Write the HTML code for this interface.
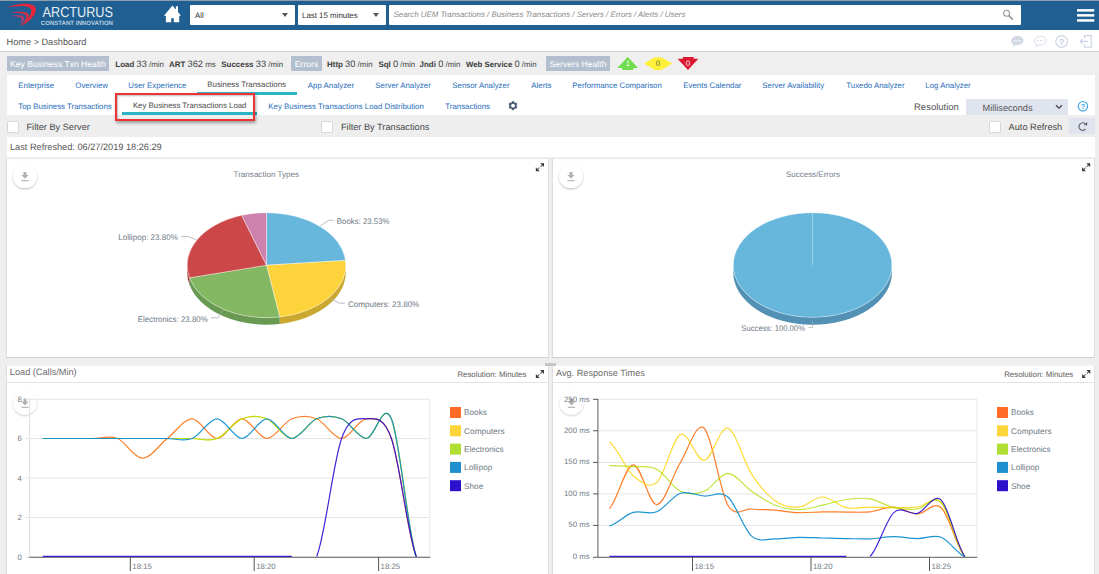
<!DOCTYPE html>
<html>
<head>
<meta charset="utf-8">
<title>Dashboard</title>
<style>
*{box-sizing:border-box;margin:0;padding:0}
html,body{text-rendering:geometricPrecision;width:1099px;height:574px;overflow:hidden;background:#eeeeee;font-family:"Liberation Sans",sans-serif;}
#root{position:relative;width:1099px;height:574px;overflow:hidden;background:#eeeeee;}
.abs{position:absolute}
.t{position:absolute;white-space:nowrap;line-height:1}
/* header */
#hdr{left:0;top:0;width:1099px;height:30px;background:#1f5f91}
.hsel{background:#fff;top:5px;height:19.6px;border-radius:1px}
.hsel .t{font-size:7.9px;color:#333;top:6.6px}
.tri{position:absolute;width:0;height:0;border-left:3px solid transparent;border-right:3px solid transparent;border-top:4.6px solid #555;top:8.1px}
/* breadcrumb */
#bc{left:0;top:30px;width:1099px;height:22px;background:#fff;border-bottom:1px solid #d4d4d4}
#bc .t{font-size:9.2px;color:#555;left:6.5px;top:8px}
/* health row */
#hr{left:0;top:52px;width:1099px;height:23px;background:#efefef}
.badge{position:absolute;top:4px;height:15px;background:#b3bfce;color:#fff;font-size:8.6px;line-height:16.6px;white-space:nowrap;text-align:center}
.hl{position:absolute;top:6.5px;font-size:7.9px;color:#444;white-space:nowrap;line-height:10px}
.hl b{font-weight:bold;font-size:7.95px;color:#3c3c3c}
.hl i{font-style:normal;font-size:9.3px;color:#444}
/* tabs */
#tabs{left:7px;top:75px;width:1088px;height:40px;background:#fff}
.tab{position:absolute;font-size:7.87px;margin-left:.3px;color:#2a6ebb;white-space:nowrap;line-height:10px}
.tab.on{color:#4a4a4a}
/* filter row */
#flt{left:0;top:115px;width:1099px;height:22px;background:#eeeeee}
.cb{position:absolute;width:12px;height:12px;background:#fff;border:1px solid #d6d6d6;border-radius:1.5px}
.fl{position:absolute;font-size:9.2px;color:#464646;white-space:nowrap;line-height:12px}
#lr{left:7px;top:137px;width:1088px;height:20px;background:#fff}
/* panels */
.panel{position:absolute;background:#fff;border:1px solid #dedede;border-top-color:#e9e9e9;border-bottom-color:#cfcfcf}
.ptitle{position:absolute;left:0;top:0;right:0;height:17px;border-bottom:1px solid #e4e4e4}
.dl{position:absolute;width:24px;height:24px;border-radius:12px;background:#fff;box-shadow:0 1px 3px rgba(0,0,0,.22)}
svg{position:absolute;left:0;top:0;overflow:visible}
svg text{font-family:"Liberation Sans",sans-serif}
</style>
</head>
<body>
<div id="root">

<!-- HEADER -->
<div id="hdr" class="abs"><div class="abs" style="left:0;top:0;width:1099px;height:1px;background:#8c9eb0"></div>
  <svg width="1099" height="30" viewBox="0 0 1099 30">
    <!-- logo swoosh -->
    <g>
      <path d="M6 7.9 C14 4.2 27 2 33.2 5.3 C38.8 9 36 17.5 21 26.6 C30.5 17.5 33.4 10.6 29.8 7.7 C26 5 15 5.9 6 7.9 Z" fill="#e9263a"/>
      <path d="M9.6 13.4 C16 11.4 25 11 28.2 13.8 C30.6 17 26 22.2 20.4 25.9 C25 21 27.4 17.6 25.7 15.3 C23.5 12.9 16 12.8 9.6 13.4Z" fill="#d62c4a"/>
      <path d="M10.4 16.3 C15 15 21.5 14.8 23.6 16.8 C25.2 19 22.6 22.6 19.4 25.6 C21.5 22.5 22.7 19.9 21.4 18.5 C20 16.7 15 16.1 10.4 16.3Z" fill="#b93a6c"/>
    </g>
    <text x="42.5" y="17.4" font-size="14.6" fill="#e4eef6" textLength="70.5" lengthAdjust="spacingAndGlyphs">ARCTURUS</text>
    <text x="40.8" y="25" font-size="6.2" font-weight="bold" fill="#b9cfe2" textLength="72.2" lengthAdjust="spacingAndGlyphs">CONSTANT INNOVATION</text>
    <!-- home icon -->
    <path d="M163.9 15.7 L172.5 5.5 L175.9 9.5 L175.9 6.2 L178 6.2 L178 12 L181.1 15.7 L179.2 15.7 L179.2 22.25 L173.8 22.25 L173.8 18.3 L171.2 18.3 L171.2 22.25 L165.9 22.25 L165.9 15.7 Z" fill="#fff"/>
    <!-- hamburger -->
    <rect x="1077" y="9.1" width="17.3" height="2.5" fill="#fff"/>
    <rect x="1077" y="14.1" width="17.3" height="2.5" fill="#fff"/>
    <rect x="1077" y="19.2" width="17.3" height="2.5" fill="#fff"/>
  </svg>
  <div class="abs hsel" style="left:190px;width:105px"><span class="t" style="left:5px">All</span><span class="tri" style="left:92px"></span></div>
  <div class="abs hsel" style="left:298px;width:88px"><span class="t" style="left:4px">Last 15 minutes</span><span class="tri" style="left:75px"></span></div>
  <div class="abs hsel" style="left:389px;width:632px"><span class="t" style="left:4.6px;font-style:italic;font-size:7.88px;color:#8a8a8a;top:6px">Search UEM Transactions / Business Transactions / Servers / Errors / Alerts / Users</span>
    <svg width="632" height="19" viewBox="0 -0.5 632 19"><circle cx="617.6" cy="7.8" r="3" fill="none" stroke="#999" stroke-width="1.1"/><path d="M620 10.3 L623.4 13.7" stroke="#999" stroke-width="1.7" stroke-linecap="round"/></svg>
  </div>
</div>

<!-- BREADCRUMB -->
<div id="bc" class="abs"><span class="t">Home &gt; Dashboard</span>
  <svg width="1099" height="22" viewBox="0 30 1099 22">
    <!-- filled chat -->
    <path d="M1011 40.6 a6.3 4.6 0 1 1 4.2 4.3 l-2.6 1.9 l0.6 -2.6 a5 4.4 0 0 1 -2.2 -3.6z" fill="#d3d9e4"/>
    <circle cx="1014.6" cy="40.8" r="0.8" fill="#fff"/><circle cx="1017.3" cy="40.8" r="0.8" fill="#fff"/><circle cx="1020" cy="40.8" r="0.8" fill="#fff"/>
    <!-- outline chat -->
    <path d="M1034.4 40.6 a6 4.4 0 1 1 4.2 4.2 l-2.6 1.9 l0.6 -2.6 a5 4.4 0 0 1 -2.2 -3.5z" fill="none" stroke="#dadfe9" stroke-width="1"/>
    <circle cx="1037.8" cy="40.8" r="0.7" fill="#d3d9e4"/><circle cx="1040.4" cy="40.8" r="0.7" fill="#d3d9e4"/><circle cx="1043" cy="40.8" r="0.7" fill="#d3d9e4"/>
    <!-- help -->
    <circle cx="1061.6" cy="41.4" r="5.8" fill="none" stroke="#c9d3e2" stroke-width="1.1"/>
    <text x="1061.6" y="44.6" font-size="9" font-weight="bold" fill="#c9d3e2" text-anchor="middle">?</text>
    <!-- logout -->
    <path d="M1084.6 38.2 V35.6 H1091.2 V47.2 H1084.6 V44.6" fill="none" stroke="#c9d3e2" stroke-width="1.1"/>
    <path d="M1088 41.4 H1080.4 M1082.8 39 L1080.4 41.4 L1082.8 43.8" fill="none" stroke="#c9d3e2" stroke-width="1.1"/>
  </svg>
</div>

<!-- HEALTH ROW -->
<div id="hr" class="abs">
  <div class="badge" style="left:6.6px;width:102.9px">Key Business Txn Health</div>
  <span class="hl" style="left:115.3px"><b>Load</b> <i>33</i> /min</span>
  <span class="hl" style="left:169px"><b>ART</b> <i>362</i> ms</span>
  <span class="hl" style="left:221.3px"><b>Success</b> <i>33</i> /min</span>
  <div class="badge" style="left:291px;width:31px">Errors</div>
  <span class="hl" style="left:327px"><b>Http</b> <i>30</i> /min</span>
  <span class="hl" style="left:378.4px"><b>Sql</b> <i>0</i> /min</span>
  <span class="hl" style="left:419.6px"><b>Jndi</b> <i>0</i> /min</span>
  <span class="hl" style="left:466px"><b style="font-size:7.8px">Web Service</b> <i>0</i> /min</span>
  <div class="badge" style="left:546px;width:64px">Servers Health</div>
  <svg width="1099" height="23" viewBox="0 52 1099 23">
    <path d="M627.7 57 L638.2 67.9 L633.2 67.9 L633.2 69.9 L622.3 69.9 L622.3 67.9 L617.3 67.9 Z" fill="#6edc4e"/>
    <text x="628" y="65.9" font-size="8" fill="#f4fff0" text-anchor="middle">1</text>
    <path d="M644.1 63.6 L654.6 57.2 L661.4 57.2 L672.3 63.6 L661.4 69.9 L654.6 69.9 Z" fill="#fff03c"/>
    <text x="658" y="66.2" font-size="8" fill="#5b6e2c" text-anchor="middle">0</text>
    <path d="M682.8 57 L693.7 57 L693.7 58.8 L698.4 58.8 L688 69.9 L677.5 58.8 L682.8 58.8 Z" fill="#dc1a32"/>
    <text x="688" y="65.7" font-size="8" fill="#ffe8ec" text-anchor="middle">0</text>
  </svg>
</div>

<!-- TABS -->
<div id="tabs" class="abs">
  <span class="tab" style="left:11px;top:5.9px">Enterprise</span>
  <span class="tab" style="left:68px;top:5.9px">Overview</span>
  <span class="tab" style="left:121px;top:5.9px">User Experience</span>
  <span class="tab on" style="left:200px;top:5.4px">Business Transactions</span>
  <div class="abs" style="left:190px;top:17.3px;width:100px;height:2.7px;background:#2db4c4"></div>
  <span class="tab" style="left:300.5px;top:5.9px">App Analyzer</span>
  <span class="tab" style="left:368px;top:5.9px">Server Analyzer</span>
  <span class="tab" style="left:445px;top:5.9px">Sensor Analyzer</span>
  <span class="tab" style="left:524px;top:5.9px">Alerts</span>
  <span class="tab" style="left:565px;top:5.9px">Performance Comparison</span>
  <span class="tab" style="left:676px;top:5.9px">Events Calendar</span>
  <span class="tab" style="left:755px;top:5.9px">Server Availability</span>
  <span class="tab" style="left:839px;top:5.9px">Tuxedo Analyzer</span>
  <span class="tab" style="left:918px;top:5.9px">Log Analyzer</span>

  <span class="tab" style="left:11px;top:26.5px">Top Business Transactions</span>
  <span class="tab on" style="left:125.6px;top:25.5px;font-size:7.84px">Key Business Transactions Load</span>
  <div class="abs" style="left:115px;top:37.4px;width:134.5px;height:2.7px;background:#2db4c4"></div>
  <span class="tab" style="left:261px;top:26.5px">Key Business Transactions Load Distribution</span>
  <span class="tab" style="left:438px;top:26.5px">Transactions</span>
  <span class="t" style="left:907px;top:27.7px;font-size:9.5px;color:#555">Resolution</span>
  <div class="abs" style="left:958.5px;top:23.5px;width:102.3px;height:16.9px;background:#dfe4ee"><span class="t" style="left:17px;top:5.6px;font-size:9.2px;color:#555">Milliseconds</span></div>
</div>
<svg width="1099" height="574" viewBox="0 0 1099 574" style="pointer-events:none">
  <!-- gear -->
  <g transform="translate(513,105.65) scale(.86)" fill="#4d5c70">
    <circle r="3.3" fill="none" stroke="#4d5c70" stroke-width="2.1"/>
    <g id="gt"><rect x="-1.25" y="-5.2" width="2.5" height="2.4"/><rect x="-1.25" y="2.8" width="2.5" height="2.4"/></g>
    <use href="#gt" transform="rotate(60)"/><use href="#gt" transform="rotate(120)"/>
  </g>
  <!-- select chevron -->
  <path d="M1056 105.3 L1059 108.2 L1062 105.3" fill="none" stroke="#444" stroke-width="1.3"/>
  <!-- help circle blue -->
  <circle cx="1082.9" cy="106.2" r="4.7" fill="none" stroke="#3aa0e8" stroke-width="1.1"/>
  <text x="1082.9" y="108.8" font-size="7.2" font-weight="bold" fill="#3aa0e8" text-anchor="middle">?</text>
</svg>

<!-- FILTER ROW -->
<div id="flt" class="abs">
  <div class="cb" style="left:6.5px;top:5.5px"></div>
  <span class="fl" style="left:26.5px;top:5.6px">Filter By Server</span>
  <div class="cb" style="left:321px;top:5.5px"></div>
  <span class="fl" style="left:341px;top:5.6px">Filter By Transactions</span>
  <div class="cb" style="left:988.5px;top:5.5px"></div>
  <span class="fl" style="left:1008.6px;top:5.6px">Auto Refresh</span>
  <div class="abs" style="left:1069px;top:3px;width:26.3px;height:15.9px;background:#dfe4ee"></div>
  <svg width="1099" height="22" viewBox="0 115 1099 22">
    <path d="M1085.2 123.9 A3.7 3.7 0 1 0 1085.4 129.2" fill="none" stroke="#555" stroke-width="1.15"/>
    <path d="M1087.2 122 L1087.2 125.2 L1084 125.2 Z" fill="#555"/>
  </svg>
</div>
<!-- red highlight box -->
<div class="abs" style="left:114.5px;top:92.5px;width:140.5px;height:28.5px;border:2px solid #ec3338;box-shadow:1px 2px 3px rgba(0,0,0,.35), inset 1px 1px 2px rgba(0,0,0,.25)"></div>
<div id="lr" class="abs"><span class="t" style="left:3px;top:6px;font-size:9.2px;color:#555">Last Refreshed: 06/27/2019 18:26:29</span></div>

<!-- PANELS -->
<div class="panel" id="p1" style="left:6px;top:158px;width:543px;height:200px"></div>
<div class="panel" id="p2" style="left:552px;top:158px;width:543px;height:200px"></div>
<div class="abs" style="left:545px;top:362.8px;width:10.6px;height:3px;background:linear-gradient(#cfcfcf,#bdbdbd);z-index:3"></div>
<div class="panel" id="p3" style="left:6px;top:365px;width:543px;height:215px;border-top-color:#f4f4f4"><div class="ptitle"></div></div>
<div class="panel" id="p4" style="left:552px;top:365px;width:543px;height:215px;border-top-color:#f4f4f4"><div class="ptitle"></div></div>
<span class="t" style="left:9.8px;top:368.4px;font-size:9.2px;color:#6a6a6a">Load (Calls/Min)</span>
<span class="t" style="left:556px;top:368.5px;font-size:9.17px;color:#6a6a6a">Avg. Response Times</span>
<span class="t" style="left:457.4px;top:370.6px;font-size:7.86px;color:#5e5e5e">Resolution: Minutes</span>
<span class="t" style="left:1004.2px;top:370.6px;font-size:7.86px;color:#5e5e5e">Resolution: Minutes</span>

<svg width="1099" height="574" viewBox="0 0 1099 574">
<defs>
  <g id="expand" fill="#3a3a3a" stroke="#3a3a3a"><path d="M8.2 0 L8.2 3.9 L4.3 0 Z" stroke="none"/><path d="M0 8 L0 4.1 L3.9 8 Z" stroke="none"/><path d="M6.6 1.6 L4.6 3.6 M1.6 6.4 L3.6 4.4" stroke-width="1.1" fill="none" stroke-opacity=".75"/></g>
  <g id="dlicon" fill="#b2b2b2"><path d="M-1.5 -4.6 H1.5 V-1.4 H3.6 L0 2.2 L-3.6 -1.4 H-1.5 Z"/><rect x="-3.6" y="3.6" width="7.2" height="1.1"/></g>
  <filter id="sh" x="-30%" y="-30%" width="160%" height="170%"><feGaussianBlur in="SourceAlpha" stdDeviation="1.1"/><feOffset dy="0.8"/><feComponentTransfer><feFuncA type="linear" slope=".28"/></feComponentTransfer><feMerge><feMergeNode/><feMergeNode in="SourceGraphic"/></feMerge></filter>
  <g id="lg">
  <rect x="0" y="407" width="11" height="11" fill="#ff6a26"/><rect x="0" y="425.3" width="11" height="11" fill="#fcd53a"/><rect x="0" y="443.6" width="11" height="11" fill="#b0de33"/><rect x="0" y="461.9" width="11" height="11" fill="#1f8fcf"/><rect x="0" y="480.2" width="11" height="11" fill="#2b10cc"/>
  <g font-size="8.2" fill="#6c7884"><text x="14.1" y="415.4">Books</text><text x="14.1" y="433.7" textLength="40.5" lengthAdjust="spacingAndGlyphs">Computers</text><text x="14.1" y="452" textLength="39.5" lengthAdjust="spacingAndGlyphs">Electronics</text><text x="14.1" y="470.3">Lollipop</text><text x="14.1" y="488.6">Shoe</text></g>
</g>
</defs>
<use href="#expand" x="535.8" y="163.2"/>
<use href="#expand" x="1082" y="163.2"/>
<use href="#expand" x="535.8" y="370"/>
<use href="#expand" x="1082.1" y="370"/>

<!-- PIE 1 -->
<text x="266.3" y="177" font-size="8" fill="#737e8a" text-anchor="middle" textLength="65.5" lengthAdjust="spacingAndGlyphs">Transaction Types</text>
<path d="M345.8 265.2A79.3 52.5 0 0 1 279.7 317.0L279.7 324.0A79.3 52.5 0 0 0 345.8 272.2Z" fill="#caa82f"/>
<path d="M279.7 317.0A79.3 52.5 0 0 1 189.5 277.8L189.5 284.8A79.3 52.5 0 0 0 279.7 324.0Z" fill="#699a52"/>
<path d="M189.5 277.8A79.3 52.5 0 0 1 187.2 265.2L187.2 272.2A79.3 52.5 0 0 0 189.5 284.8Z" fill="#a3393a"/>
<path d="M266.5 265.2L266.5 212.7A79.3 52.5 0 0 1 345.5 260.4Z" fill="#67b7dc" stroke="#fff" stroke-opacity=".55" stroke-width=".7" stroke-linejoin="round"/>
<path d="M266.5 265.2L345.5 260.4A79.3 52.5 0 0 1 279.7 317.0Z" fill="#fdd33c" stroke="#fff" stroke-opacity=".55" stroke-width=".7" stroke-linejoin="round"/>
<path d="M266.5 265.2L279.7 317.0A79.3 52.5 0 0 1 189.5 277.8Z" fill="#84b761" stroke="#fff" stroke-opacity=".55" stroke-width=".7" stroke-linejoin="round"/>
<path d="M266.5 265.2L189.5 277.8A79.3 52.5 0 0 1 241.7 215.3Z" fill="#cc4748" stroke="#fff" stroke-opacity=".55" stroke-width=".7" stroke-linejoin="round"/>
<path d="M266.5 265.2L241.7 215.3A79.3 52.5 0 0 1 266.5 212.7Z" fill="#cd82ad" stroke="#fff" stroke-opacity=".55" stroke-width=".7" stroke-linejoin="round"/>
<g fill="none" stroke="#a4aab0" stroke-width=".75">
  <path d="M320 226.2 L328.5 220.3 L333.6 220.3"/>
  <path d="M330.2 298.7 L339.6 303.2 L344.9 303.2"/>
  <path d="M222.7 310 L218.3 317.8 L211 317.8"/>
  <path d="M196.3 239.6 L188.6 236.6 L181.2 236.6"/>
</g>
<g font-size="8.2" fill="#6c7884">
  <text x="336.8" y="224.1" textLength="52.7" lengthAdjust="spacingAndGlyphs">Books: 23.53%</text>
  <text x="348" y="306.7" textLength="71.3" lengthAdjust="spacingAndGlyphs">Computers: 23.80%</text>
  <text x="137.8" y="321.6" textLength="70" lengthAdjust="spacingAndGlyphs">Electronics: 23.80%</text>
  <text x="118.3" y="240" textLength="59.7" lengthAdjust="spacingAndGlyphs">Lollipop: 23.80%</text>
</g>

<!-- PIE 2 -->
<text x="813" y="177" font-size="8" fill="#737e8a" text-anchor="middle" textLength="54" lengthAdjust="spacingAndGlyphs">Success/Errors</text>
<path d="M891.9 265.0A79.3 52.3 0 0 1 733.3 265.0L733.3 272.5A79.3 52.3 0 0 0 891.9 272.5Z" fill="#5291b4"/>
<ellipse cx="812.6" cy="265" rx="79.3" ry="52.3" fill="#67b7dc" stroke="#fff" stroke-opacity=".55" stroke-width=".7"/>
<path d="M812.6 265L812.6 212.7" stroke="#fff" stroke-opacity=".55" stroke-width=".7"/>
<path d="M812.6 321 L812.6 327.5 L808.5 327.5" fill="none" stroke="#aab0b6" stroke-width=".7"/>
<text x="741.3" y="330.9" font-size="8.2" fill="#6c7884" textLength="63.7" lengthAdjust="spacingAndGlyphs">Success: 100.00%</text>

<!-- bottom download buttons (under labels) -->
<g filter="url(#sh)" opacity=".8"><circle cx="25" cy="403" r="11.8" fill="#fff"/><circle cx="571.5" cy="403" r="11.8" fill="#fff"/></g>
<use href="#dlicon" x="25" y="403.2"/><use href="#dlicon" x="571.5" y="403.2"/>
<!-- LEFT LINE CHART -->
<g stroke="#e5e5e5" stroke-width="1" fill="none">
  <path d="M25.7 399.3 H30 M25.7 438.6 H30 M25.7 478 H30 M25.7 517.5 H30" stroke="#e4e4e4"/>
  <path d="M30 399.3 H430 M30 438.6 H430 M30 478 H430 M30 517.5 H430"/>
  <path d="M29.7 399 V557" stroke="#dedede"/><path d="M429.7 399 V557" stroke="#ececec"/>
</g>
<path d="M26 557.3 H30" stroke="#ddd" stroke-width="1"/><path d="M29.5 557.3 H430.2" stroke="#555" stroke-width="1.1"/>
<path d="M130.3 557 V571 M254.2 557 V571 M378.6 557 V571" stroke="#555" stroke-width="1"/>
<g font-size="7.8" fill="#6e7a86">
  <text x="21.8" y="401.8" text-anchor="end">8</text><text x="21.8" y="441.2" text-anchor="end">6</text><text x="21.8" y="480.6" text-anchor="end">4</text><text x="21.8" y="520.2" text-anchor="end">2</text><text x="21.8" y="559.6" text-anchor="end">0</text>
  <text x="132.3" y="569.1">18:15</text><text x="256.2" y="569.1">18:20</text><text x="380.6" y="569.1">18:25</text>
</g>
<path d="M42.8 438.5C51.1 438.5 59.4 438.5 67.7 438.5C76.0 438.5 84.3 438.5 92.6 438.5C100.9 438.5 109.2 435.2 117.5 438.5C125.8 441.8 134.1 458.2 142.4 458.2C150.7 458.2 159.0 445.1 167.3 438.5C175.6 431.9 183.9 418.8 192.2 418.8C200.5 418.8 208.8 438.5 217.1 438.5C225.4 438.5 233.7 418.8 242.0 418.8C250.3 418.8 258.6 438.5 266.9 438.5C275.2 438.5 283.5 422.1 291.8 418.8C300.1 415.5 308.4 415.5 316.7 418.8C325.0 422.1 333.3 438.5 341.6 438.5C349.9 438.5 358.2 418.8 366.5 418.8C374.8 418.8 383.1 415.5 391.4 438.5C399.7 461.5 408.0 537.2 416.3 556.9" fill="none" stroke="#FF6600" stroke-width="1.2" stroke-opacity="0.85"/>
<path d="M42.8 438.5C51.1 438.5 59.4 438.5 67.7 438.5C76.0 438.5 84.3 438.5 92.6 438.5C100.9 438.5 109.2 438.5 117.5 438.5C125.8 438.5 134.1 438.5 142.4 438.5C150.7 438.5 159.0 438.5 167.3 438.5C175.6 438.5 183.9 438.5 192.2 438.5C200.5 438.5 208.8 441.8 217.1 438.5C225.4 435.2 233.7 422.1 242.0 418.8C250.3 415.5 258.6 415.5 266.9 418.8C275.2 422.1 283.5 438.5 291.8 438.5C300.1 438.5 308.4 422.1 316.7 418.8C325.0 415.5 333.3 415.5 341.6 418.8C349.9 422.1 358.2 438.5 366.5 438.5C374.8 438.5 383.1 399.1 391.4 418.8C399.7 438.5 408.0 533.9 416.3 556.9" fill="none" stroke="#FCD202" stroke-width="1.2" stroke-opacity="0.8"/>
<path d="M42.8 438.5C51.1 438.5 59.4 438.5 67.7 438.5C76.0 438.5 84.3 438.5 92.6 438.5C100.9 438.5 109.2 438.5 117.5 438.5C125.8 438.5 134.1 438.5 142.4 438.5C150.7 438.5 159.0 438.5 167.3 438.5C175.6 438.5 183.9 438.5 192.2 438.5C200.5 438.5 208.8 441.8 217.1 438.5C225.4 435.2 233.7 422.1 242.0 418.8C250.3 415.5 258.6 415.5 266.9 418.8C275.2 422.1 283.5 438.5 291.8 438.5C300.1 438.5 308.4 422.1 316.7 418.8C325.0 415.5 333.3 415.5 341.6 418.8C349.9 422.1 358.2 438.5 366.5 438.5C374.8 438.5 383.1 399.1 391.4 418.8C399.7 438.5 408.0 533.9 416.3 556.9" fill="none" stroke="#B0DE09" stroke-width="1.2" stroke-opacity="0.8"/>
<path d="M42.8 438.5C51.1 438.5 59.4 438.5 67.7 438.5C76.0 438.5 84.3 438.5 92.6 438.5C100.9 438.5 109.2 438.5 117.5 438.5C125.8 438.5 134.1 438.5 142.4 438.5C150.7 438.5 159.0 438.5 167.3 438.5C175.6 438.5 183.9 441.8 192.2 438.5C200.5 435.2 208.8 418.8 217.1 418.8C225.4 418.8 233.7 438.5 242.0 438.5C250.3 438.5 258.6 418.8 266.9 418.8C275.2 418.8 283.5 438.5 291.8 438.5C300.1 438.5 308.4 422.1 316.7 418.8C325.0 415.5 333.3 415.5 341.6 418.8C349.9 422.1 358.2 438.5 366.5 438.5C374.8 438.5 383.1 399.1 391.4 418.8C399.7 438.5 408.0 533.9 416.3 556.9" fill="none" stroke="#0D8ECF" stroke-width="1.2" stroke-opacity="0.94"/>
<path d="M42.8 556.4C51.1 556.4 59.4 556.4 67.7 556.4C76.0 556.4 84.3 556.4 92.6 556.4C100.9 556.4 109.2 556.4 117.5 556.4C125.8 556.4 134.1 556.4 142.4 556.4C150.7 556.4 159.0 556.4 167.3 556.4C175.6 556.4 183.9 556.4 192.2 556.4C200.5 556.4 208.8 556.4 217.1 556.4C225.4 556.4 233.7 556.4 242.0 556.4C250.3 556.4 258.6 556.4 266.9 556.4C275.2 556.4 283.5 556.4 291.8 556.4" fill="none" stroke="#2A0CD0" stroke-width="1.2" stroke-opacity="0.9"/>
<path d="M316.7 556.4C325.0 536.8 333.3 461.4 341.6 438.5C349.9 415.5 358.2 418.8 366.5 418.8C374.8 418.8 383.1 415.5 391.4 438.5C399.7 461.4 408.0 536.8 416.3 556.4" fill="none" stroke="#2A0CD0" stroke-width="1.2" stroke-opacity="0.9"/>

<!-- RIGHT LINE CHART -->
<g stroke="#e5e5e5" stroke-width="1" fill="none">
  <path d="M598 399.3 H977 M598 430.8 H977 M598 462.4 H977 M598 493.9 H977 M598 525.4 H977"/>
  <path d="M976.8 399 V557" stroke="#ececec"/>
</g>
<path d="M597.9 399 V557.3 M593 557.3 H977.2" stroke="#5c5c5c" stroke-width="1" fill="none"/>
<path d="M593 399.3 H598 M593 430.8 H598 M593 462.4 H598 M593 493.9 H598 M593 525.4 H598" stroke="#555" stroke-width="1"/>
<path d="M692.5 557 V571 M811 557 V571 M929.5 557 V571" stroke="#555" stroke-width="1"/>
<g font-size="7.8" fill="#6e7a86">
  <text x="589.6" y="401.6" text-anchor="end">250 ms</text><text x="589.6" y="432.6" text-anchor="end">200 ms</text><text x="589.6" y="464" text-anchor="end">150 ms</text><text x="589.6" y="495.8" text-anchor="end">100 ms</text><text x="589.6" y="527.3" text-anchor="end">50 ms</text><text x="589.6" y="559" text-anchor="end">0 ms</text>
  <text x="694.5" y="569.1">18:15</text><text x="813" y="569.1">18:20</text><text x="931.5" y="569.1">18:25</text>
</g>
<path d="M609.4 508.5C617.3 501.2 625.2 465.5 633.1 464.8C641.0 464.1 648.9 505.0 656.8 504.5C664.7 504.1 672.6 475.0 680.5 462.3C688.4 449.6 696.3 421.1 704.2 428.2C712.1 435.4 720.0 491.7 727.9 505.2C735.8 518.6 743.7 508.1 751.6 509.0C759.5 509.8 767.4 509.6 775.3 510.2C783.2 510.9 791.1 512.5 799.0 512.7C806.9 513.0 814.8 511.9 822.7 511.8C830.6 511.7 838.5 512.1 846.4 512.1C854.3 512.1 862.2 512.6 870.1 511.8C878.0 511.0 885.9 506.7 893.8 507.1C901.7 507.4 909.6 513.9 917.5 514.0C925.4 514.1 933.3 500.5 941.2 507.7C949.1 514.8 957.0 548.7 964.9 556.9" fill="none" stroke="#FF6600" stroke-width="1.2" stroke-opacity="0.85"/>
<path d="M609.4 441.7C617.3 447.3 625.2 468.7 633.1 475.5C641.0 482.3 648.9 489.3 656.8 482.5C664.7 475.6 672.6 438.2 680.5 434.5C688.4 430.8 696.3 461.4 704.2 460.4C712.1 459.3 720.0 425.9 727.9 428.2C735.8 430.5 743.7 462.1 751.6 474.3C759.5 486.4 767.4 495.5 775.3 500.9C783.2 506.4 791.1 507.7 799.0 507.1C806.9 506.4 814.8 496.9 822.7 497.0C830.6 497.1 838.5 506.0 846.4 507.7C854.3 509.4 862.2 507.1 870.1 507.1C878.0 507.1 885.9 507.7 893.8 507.7C901.7 507.7 909.6 507.9 917.5 507.1C925.4 506.3 933.3 494.6 941.2 502.9C949.1 511.2 957.0 547.9 964.9 556.9" fill="none" stroke="#FCD202" stroke-width="1.2" stroke-opacity="0.8"/>
<path d="M609.4 465.7C617.3 465.9 625.2 466.1 633.1 466.7C641.0 467.3 648.9 465.1 656.8 469.2C664.7 473.3 672.6 487.6 680.5 491.3C688.4 495.0 696.3 494.3 704.2 491.3C712.1 488.3 720.0 473.3 727.9 473.3C735.8 473.3 743.7 486.0 751.6 491.3C759.5 496.6 767.4 502.1 775.3 505.2C783.2 508.2 791.1 509.6 799.0 509.6C806.9 509.6 814.8 506.9 822.7 505.2C830.6 503.5 838.5 500.5 846.4 499.5C854.3 498.4 862.2 497.5 870.1 498.9C878.0 500.2 885.9 506.0 893.8 507.7C901.7 509.4 909.6 509.9 917.5 509.0C925.4 508.0 933.3 494.0 941.2 502.0C949.1 510.0 957.0 547.8 964.9 556.9" fill="none" stroke="#B0DE09" stroke-width="1.2" stroke-opacity="0.8"/>
<path d="M609.4 526.0C617.3 523.7 625.2 514.8 633.1 512.4C641.0 510.1 648.9 515.0 656.8 511.8C664.7 508.6 672.6 495.8 680.5 493.2C688.4 490.6 696.3 495.4 704.2 496.0C712.1 496.7 720.0 490.3 727.9 497.0C735.8 503.6 743.7 529.1 751.6 536.1C759.5 543.1 767.4 538.6 775.3 538.8C783.2 539.0 791.1 537.5 799.0 537.3C806.9 537.2 814.8 537.8 822.7 538.0C830.6 538.2 838.5 538.5 846.4 538.6C854.3 538.7 862.2 539.1 870.1 538.8C878.0 538.5 885.9 536.7 893.8 536.7C901.7 536.7 909.6 538.5 917.5 538.6C925.4 538.7 933.3 534.3 941.2 537.3C949.1 540.4 957.0 553.6 964.9 556.9" fill="none" stroke="#0D8ECF" stroke-width="1.2" stroke-opacity="0.94"/>
<path d="M609.4 556.4C617.3 556.4 625.2 556.4 633.1 556.4C641.0 556.4 648.9 556.4 656.8 556.4C664.7 556.4 672.6 556.4 680.5 556.4C688.4 556.4 696.3 556.4 704.2 556.4C712.1 556.4 720.0 556.4 727.9 556.4C735.8 556.4 743.7 556.4 751.6 556.4C759.5 556.4 767.4 556.4 775.3 556.4C783.2 556.4 791.1 556.4 799.0 556.4C806.9 556.4 814.8 556.4 822.7 556.4C830.6 556.4 838.5 556.4 846.4 556.4" fill="none" stroke="#2A0CD0" stroke-width="1.2" stroke-opacity="0.9"/>
<path d="M870.1 556.4C878.0 549.1 885.9 519.8 893.8 512.6C901.7 505.4 909.6 515.4 917.5 513.3C925.4 511.2 933.3 492.9 941.2 500.1C949.1 507.3 957.0 547.1 964.9 556.4" fill="none" stroke="#2A0CD0" stroke-width="1.2" stroke-opacity="0.9"/>

<!-- LEGENDS -->

<use href="#lg" x="450"/>
<use href="#lg" x="997"/>

<!-- download buttons -->
<g filter="url(#sh)"><circle cx="25" cy="176.3" r="11.8" fill="#fff"/><circle cx="571" cy="176.3" r="11.8" fill="#fff"/></g>
<use href="#dlicon" x="25" y="176.5"/><use href="#dlicon" x="571" y="176.5"/>
</svg>

</div>
</body>
</html>
